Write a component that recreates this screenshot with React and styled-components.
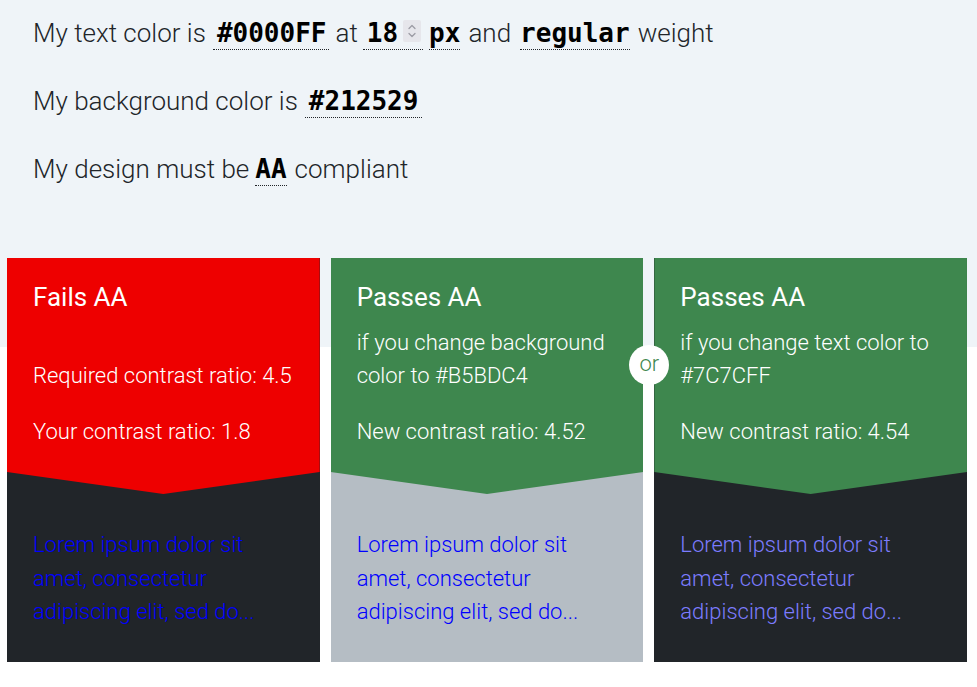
import React from "react";
import styled, { createGlobalStyle } from "styled-components";

const Global = createGlobalStyle`
  html, body { margin: 0; padding: 0; background: #ffffff; }
  body { font-family: Roboto, "Noto Sans", sans-serif; }
  * { box-sizing: border-box; }
`;

const Page = styled.div`
  width: 977px;
  min-height: 687px;
  background: #ffffff;
`;

const Header = styled.section`
  background: #eff4f8;
  height: 347px;
  padding: 15px 33px 0;
`;

const Sentence = styled.p`
  margin: 0 0 32px;
  font-size: 26px;
  font-weight: 300;
  line-height: 36px;
  color: #212529;
  display: flex;
  align-items: baseline;
  white-space: pre;
`;

const Value = styled.span`
  display: inline-block;
  margin: 0 ${(p) => p.$mr ?? 8}px 0 ${(p) => p.$ml ?? 8}px;
  padding: 0 ${(p) => p.$pr ?? 0}px 0 ${(p) => p.$pl ?? 0}px;
  border-bottom: 1px dotted #212529;
  font-family: "DejaVu Sans Mono", "Liberation Mono", monospace;
  font-weight: 700;
  font-size: 26px;
  line-height: 1.2;
  color: #000;
`;

const Spinner = styled.span`
  display: inline-flex;
  align-items: center;
  justify-content: center;
  vertical-align: top;
  width: 18px;
  height: 22px;
  margin: 2px 0 0 5px;
  background: #e6e6eb;
  border-radius: 2px;
`;

const Cards = styled.div`
  display: grid;
  grid-template-columns: repeat(3, 1fr);
  gap: 11px;
  padding: 0 10px 0 7px;
  margin-top: -89px;
`;

const Card = styled.article`
  position: relative;
  background: ${(p) => p.$bg};
  height: 404px;
  display: flex;
  flex-direction: column;
`;

const Top = styled.div`
  background: ${(p) => p.$bg};
  height: 236px;
  padding: 21px 26px 0;
  color: #ffffff;
  clip-path: polygon(0 0, 100% 0, 100% calc(100% - 22px), 50% 100%, 0 calc(100% - 22px));
`;

const Title = styled.h2`
  margin: 0;
  font-size: 26px;
  font-weight: 400;
  line-height: 36px;
`;

const Detail = styled.div`
  margin-top: 11px;
  min-height: 66px;
  display: flex;
  flex-direction: column;
  justify-content: flex-end;
  font-size: 22px;
  font-weight: 300;
  line-height: 33px;
`;

const Ratio = styled.div`
  margin-top: 23px;
  font-size: 22px;
  font-weight: 300;
  line-height: 33px;
`;

const Sample = styled.p`
  margin: 0;
  padding: 34px 26px 0;
  font-size: 22px;
  font-weight: 300;
  line-height: 33.5px;
  color: ${(p) => p.$color};
`;

const Or = styled.div`
  position: absolute;
  right: -26px;
  top: 87px;
  width: 40px;
  height: 40px;
  border-radius: 50%;
  background: #ffffff;
  color: #3e874e;
  font-size: 22px;
  font-weight: 300;
  display: flex;
  align-items: center;
  justify-content: center;
  z-index: 2;
  padding-bottom: 3px;
`;

const GREEN = "#3e874e";
const LOREM = "Lorem ipsum dolor sit amet, consectetur adipiscing elit, sed do...";

export default function App() {
  return (
    <Page>
      <Global />
      <Header>
        <Sentence>
          My text color is
          <Value $ml={7} $mr={6} $pl={4} $pr={3}>#0000FF</Value>
          at
          <Value $ml={5} $mr={0} $pl={4} $pr={2}>
            18
            <Spinner>
              <svg width="12" height="18" viewBox="0 0 12 18">
                <path d="M3 6.5 L6 3.5 L9 6.5" fill="none" stroke="#9c9ca5" strokeWidth="1.3" strokeLinecap="round" strokeLinejoin="round" />
                <path d="M3 11.5 L6 14.5 L9 11.5" fill="none" stroke="#9c9ca5" strokeWidth="1.3" strokeLinecap="round" strokeLinejoin="round" />
              </svg>
            </Spinner>
          </Value>
          <Value $ml={6} $mr={8}>px</Value>
          and
          <Value $ml={9} $mr={8}>regular</Value>
          weight
        </Sentence>
        <Sentence>
          My background color is
          <Value $ml={7} $pl={4} $pr={4}>#212529</Value>
        </Sentence>
        <Sentence>
          My design must be
          <Value $ml={6} $mr={8}>AA</Value>
          compliant
        </Sentence>
      </Header>
      <Cards>
        <Card $bg="#212529">
          <Top $bg="#ee0000">
            <Title>Fails AA</Title>
            <Detail>Required contrast ratio: 4.5</Detail>
            <Ratio>Your contrast ratio: 1.8</Ratio>
          </Top>
          <Sample $color="#0000ff">{LOREM}</Sample>
        </Card>
        <Card $bg="#b5bdc4">
          <Top $bg={GREEN}>
            <Title>Passes AA</Title>
            <Detail>if you change background color to #B5BDC4</Detail>
            <Ratio>New contrast ratio: 4.52</Ratio>
          </Top>
          <Sample $color="#0000ff">{LOREM}</Sample>
          <Or>or</Or>
        </Card>
        <Card $bg="#212529">
          <Top $bg={GREEN}>
            <Title>Passes AA</Title>
            <Detail>if you change text color to #7C7CFF</Detail>
            <Ratio>New contrast ratio: 4.54</Ratio>
          </Top>
          <Sample $color="#7c7cff">{LOREM}</Sample>
        </Card>
      </Cards>
    </Page>
  );
}
